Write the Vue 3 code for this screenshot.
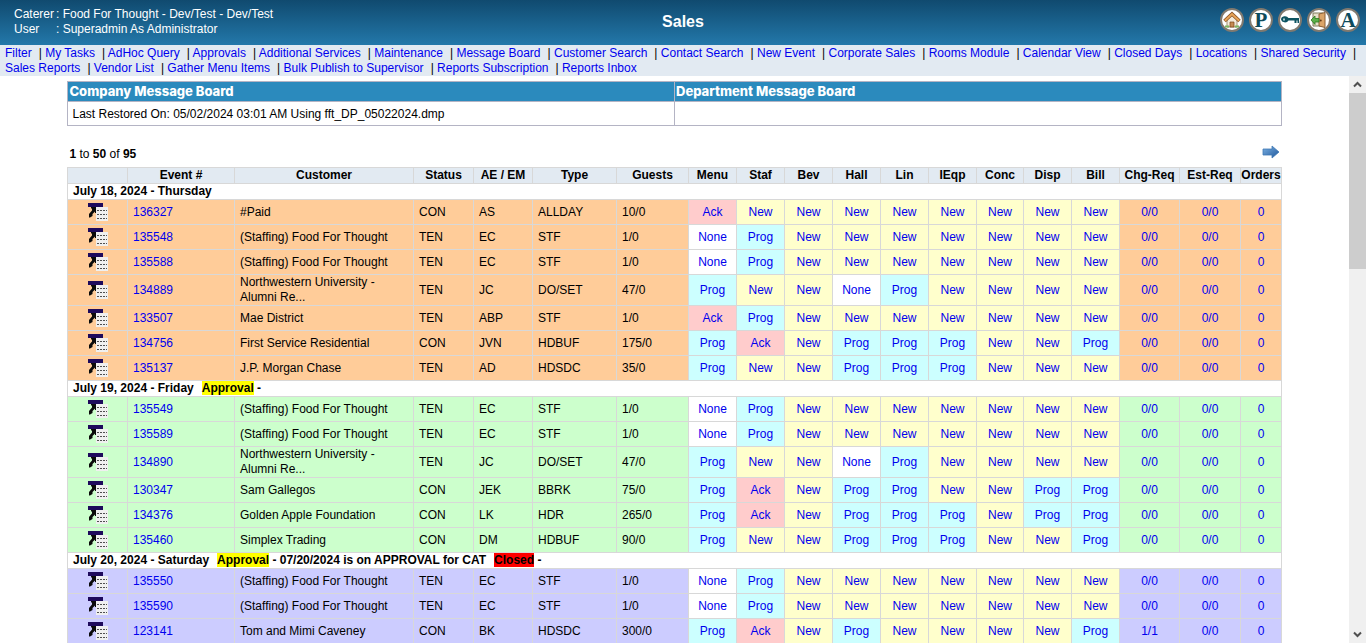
<script setup>
const nav = [
  'Filter', 'My Tasks', 'AdHoc Query', 'Approvals', 'Additional Services', 'Maintenance',
  'Message Board', 'Customer Search', 'Contact Search', 'New Event', 'Corporate Sales',
  'Rooms Module', 'Calendar View', 'Closed Days', 'Locations', 'Shared Security',
  'Sales Reports', 'Vendor List', 'Gather Menu Items', 'Bulk Publish to Supervisor',
  'Reports Subscription', 'Reports Inbox'
]

const columns = [
  ['', 'c60'], ['Event #', 'c107'], ['Customer', 'c179'], ['Status', 'c60'], ['AE / EM', 'c59'],
  ['Type', 'c84'], ['Guests', 'c72'], ['Menu', 'c48'], ['Staf', 'c48'], ['Bev', 'c48'],
  ['Hall', 'c48'], ['Lin', 'c48'], ['IEqp', 'c48'], ['Conc', 'c47'], ['Disp', 'c48'],
  ['Bill', 'c48'], ['Chg-Req', 'c60'], ['Est-Req', 'c61'], ['Orders', 'c41']
]

const labels = { A: 'Ack', N: 'New', P: 'Prog', O: 'None' }

// Department states are one letter each, in column order from Menu to Bill.
const ev = (id, customer, status, ae, type, guests, states, chg = '0/0') => ({
  id, customer, status, ae, type, guests, states: states.split(''), chg
})

const groups = [
  {
    date: 'July 18, 2024 - Thursday', tone: 'orange', notes: [],
    events: [
      ev(136327, '#Paid', 'CON', 'AS', 'ALLDAY', '10/0', 'ANNNNNNNN'),
      ev(135548, '(Staffing) Food For Thought', 'TEN', 'EC', 'STF', '1/0', 'OPNNNNNNN'),
      ev(135588, '(Staffing) Food For Thought', 'TEN', 'EC', 'STF', '1/0', 'OPNNNNNNN'),
      ev(134889, 'Northwestern University - Alumni Re...', 'TEN', 'JC', 'DO/SET', '47/0', 'PNNOPNNNN'),
      ev(133507, 'Mae District', 'TEN', 'ABP', 'STF', '1/0', 'APNNNNNNN'),
      ev(134756, 'First Service Residential', 'CON', 'JVN', 'HDBUF', '175/0', 'PANPPPNNP'),
      ev(135137, 'J.P. Morgan Chase', 'TEN', 'AD', 'HDSDC', '35/0', 'PNNPPPNNN')
    ]
  },
  {
    date: 'July 19, 2024 - Friday', tone: 'green', notes: [['Approval', 'yellow', '-']],
    events: [
      ev(135549, '(Staffing) Food For Thought', 'TEN', 'EC', 'STF', '1/0', 'OPNNNNNNN'),
      ev(135589, '(Staffing) Food For Thought', 'TEN', 'EC', 'STF', '1/0', 'OPNNNNNNN'),
      ev(134890, 'Northwestern University - Alumni Re...', 'TEN', 'JC', 'DO/SET', '47/0', 'PNNOPNNNN'),
      ev(130347, 'Sam Gallegos', 'CON', 'JEK', 'BBRK', '75/0', 'PANPPNNPP'),
      ev(134376, 'Golden Apple Foundation', 'CON', 'LK', 'HDR', '265/0', 'PANPPPNPP'),
      ev(135460, 'Simplex Trading', 'CON', 'DM', 'HDBUF', '90/0', 'PNNPPPNNP')
    ]
  },
  {
    date: 'July 20, 2024 - Saturday', tone: 'violet',
    notes: [['Approval', 'yellow', '- 07/20/2024 is on APPROVAL for CAT'], ['Closed', 'red', '-']],
    events: [
      ev(135550, '(Staffing) Food For Thought', 'TEN', 'EC', 'STF', '1/0', 'OPNNNNNNN'),
      ev(135590, '(Staffing) Food For Thought', 'TEN', 'EC', 'STF', '1/0', 'OPNNNNNNN'),
      ev(123141, 'Tom and Mimi Caveney', 'CON', 'BK', 'HDSDC', '300/0', 'PANPNNNNP', '1/1')
    ]
  }
]
</script>

<template>
  <div class="page">
    <header class="banner">
      <dl class="who">
        <dt>Caterer</dt><dd>: Food For Thought - Dev/Test - Dev/Test</dd>
        <dt>User</dt><dd>: Superadmin As Administrator</dd>
      </dl>
      <h1>Sales</h1>
      <div class="tools">
        <a href="#" aria-label="Home">
          <svg viewBox="0 0 20 20">
            <path d="M5 10v7h10v-7l-5-5z" fill="#f3ead9" stroke="#a49074" />
            <path d="M2.500 11 10 4l7.500 7" fill="none" stroke="#8a5426" stroke-width="3.600" />
            <path d="M2.800 10.700 10 4l7.200 6.700" fill="none" stroke="#e8a458" stroke-width="2" />
            <path d="M8 17v-5h4v5z" fill="#c58a52" stroke="#7a4518" stroke-width=".7" />
            <path d="M3 15.500h4v2H3zM13 15.500h4v2h-4z" fill="#7cb860" />
          </svg>
        </a>
        <a href="#" aria-label="P" class="letter">P</a>
        <a href="#" aria-label="Key">
          <svg viewBox="0 0 20 20">
            <path d="M1 9.500a4 3.500 0 0 1 7.500-1.500H19v5h-1.500v-2.500h-1V13h-2v-2.500h-6A4 3.500 0 0 1 1 9.500z" fill="#0d5361" />
            <path d="M3 8.500h2v2H3z" fill="#a8ccd0" />
          </svg>
        </a>
        <a href="#" aria-label="Exit">
          <svg viewBox="0 0 20 20">
            <path d="M4 3h10v13H4z" fill="#e6dfc9" stroke="#7d7a5c" />
            <path d="M10 4l6-1.500v15L10 16z" fill="#dba468" stroke="#8b5f36" />
            <circle cx="11.800" cy="10.500" r=".9" fill="#5b3512" />
            <path d="M2 10l4-4v2.500h4v3.500H6v2.500z" fill="#5bb04a" stroke="#2c7a20" stroke-width=".8" />
          </svg>
        </a>
        <a href="#" aria-label="A" class="letter">A</a>
      </div>
    </header>

    <nav class="menu">
      <template v-for="(item, i) in nav" :key="item">
        <span class="item"><a href="#">{{ item }}</a><span v-if="i < nav.length - 1" class="bar">|</span></span>{{ ' ' }}
      </template>
    </nav>

    <div class="body">
      <main class="content">
        <table class="board">
          <thead>
            <tr><th>Company Message Board</th><th>Department Message Board</th></tr>
          </thead>
          <tbody>
            <tr><td>Last Restored On: 05/02/2024 03:01 AM Using fft_DP_05022024.dmp</td><td></td></tr>
          </tbody>
        </table>

        <div class="pager">
          <span><b>1</b> to <b>50</b> of <b>95</b></span>
          <a href="#" aria-label="Next page">
            <svg viewBox="0 0 18 14">
              <defs>
                <linearGradient id="arrow" x1="0" y1="0" x2="1" y2="1">
                  <stop offset="0" stop-color="#7db2e4" />
                  <stop offset="1" stop-color="#1d5599" />
                </linearGradient>
              </defs>
              <path d="M1 4h9V1l7 6-7 6v-3H1z" fill="url(#arrow)" stroke="#3f78b5" stroke-width=".8" />
            </svg>
          </a>
        </div>

        <table class="events">
          <colgroup>
            <col v-for="(c, i) in columns" :key="i" :class="c[1]">
          </colgroup>
          <thead>
            <tr><th v-for="(c, i) in columns" :key="i">{{ c[0] }}</th></tr>
          </thead>
          <tbody v-for="g in groups" :key="g.date" :class="g.tone">
            <tr class="day">
              <th colspan="19" scope="rowgroup">{{ g.date }}<template v-for="n in g.notes" :key="n[0]"><mark :class="n[1]">{{ n[0] }}</mark> {{ n[2] }}</template></th>
            </tr>
            <tr v-for="e in g.events" :key="e.id">
              <td class="mid">
                <a href="#" class="pick" :aria-label="'Actions for ' + e.id">
                  <svg viewBox="0 0 20 18">
                    <path d="M8 4h12v14H8z" fill="#f0f0f0" />
                    <path d="M0 0h15v4H0z" fill="#1e0a5c" />
                    <path d="M9 7.500h10M9 11.500h10M9 15.500h10" stroke="#505050" stroke-dasharray="2 1" />
                    <path d="M3 4h5v6H7V8.500L4.500 11v2L2 14.500H1V11l3-3.500V5.500H3z" fill="#0a0a0a" />
                  </svg>
                </a>
              </td>
              <td><a href="#">{{ e.id }}</a></td>
              <td>{{ e.customer }}</td>
              <td>{{ e.status }}</td>
              <td>{{ e.ae }}</td>
              <td>{{ e.type }}</td>
              <td>{{ e.guests }}</td>
              <td v-for="(s, i) in e.states" :key="i" class="mid" :class="labels[s].toLowerCase()">
                <a href="#">{{ labels[s] }}</a>
              </td>
              <td class="mid"><a href="#">{{ e.chg }}</a></td>
              <td class="mid"><a href="#">0/0</a></td>
              <td class="mid"><a href="#">0</a></td>
            </tr>
          </tbody>
        </table>
      </main>

      <div class="scroll" aria-hidden="true">
        <svg viewBox="0 0 17 17"><path d="M5 10.500 8.500 7l3.500 3.500" /></svg>
        <div class="track"><div class="thumb"></div></div>
        <svg viewBox="0 0 17 17"><path d="M5 6.500 8.500 10 12 6.500" /></svg>
      </div>
    </div>
  </div>
</template>

<style>
body {
  margin: 0;
  overflow: hidden;
}
</style>

<style scoped>
.page {
  display: flex;
  flex-direction: column;
  height: 100vh;
  background: #fff;
  color: #000;
  font: 12px/15px "Liberation Sans", Arial, sans-serif;
}
a {
  color: #00e;
  text-decoration: none;
}
.banner {
  display: grid;
  grid-template-columns: 1fr auto 1fr;
  align-items: center;
  height: 45px;
  flex: none;
  padding: 0 6px 2px;
  box-sizing: border-box;
  background: linear-gradient(#104a6f, #2378aa);
  color: #fff;
}
.who {
  display: grid;
  grid-template-columns: 42px 1fr;
  margin: 0 0 0 8px;
}
.who dd {
  margin: 0;
}
.banner h1 {
  margin: 0;
  font-size: 16px;
  line-height: 20px;
}
.tools {
  display: flex;
  justify-content: flex-end;
  gap: 5px;
  padding-bottom: 4px;
}
.tools a {
  width: 20px;
  height: 20px;
  border: 2px solid #80796f;
  border-radius: 50%;
  background: #fff;
}
.tools svg {
  display: block;
}
.tools .letter {
  color: #0d4a5c;
  font: bold 21px/20px "Liberation Serif", serif;
  text-align: center;
}
.menu {
  flex: none;
  padding: 1px 0 0 5px;
  background: #e2eaf2;
}
.item {
  white-space: nowrap;
}
.bar {
  margin-left: 7px;
}
.body {
  display: flex;
  flex: 1;
  min-height: 0;
}
.content {
  flex: 1;
  overflow: hidden;
  padding-top: 5px;
}
.board {
  width: 90%;
  margin: 0 auto;
  table-layout: fixed;
  border-collapse: collapse;
}
.board th,
.board td {
  border: 1px solid #b4b4c4;
  text-align: left;
}
.board th {
  padding: 2px 1px;
  background: #2b8abd;
  color: #fff;
  font: 800 13px/15px Inter, "Liberation Sans", sans-serif;
}
.board td {
  height: 15px;
  padding: 5px 4px 3px;
}
.pager {
  display: flex;
  justify-content: space-between;
  width: 90%;
  margin: 18px auto 3px;
  padding: 0 2px;
  box-sizing: border-box;
  line-height: 20px;
}
.pager svg {
  display: block;
  width: 18px;
  height: 14px;
  margin-top: 1px;
}
.events {
  width: 90%;
  margin: 0 auto;
  table-layout: fixed;
  border-collapse: collapse;
}
.c41 { width: 41px; }
.c47 { width: 47px; }
.c48 { width: 48px; }
.c59 { width: 59px; }
.c60 { width: 60px; }
.c61 { width: 61px; }
.c72 { width: 72px; }
.c84 { width: 84px; }
.c107 { width: 107px; }
.c179 { width: 179px; }
.events th,
.events td {
  border: 1px solid #d8d8d8;
}
.events th {
  padding: 0;
  background: #e2eaf2;
  white-space: nowrap;
}
.events td {
  height: 25px;
  padding: 0 5px;
  box-sizing: border-box;
}
.events .day th {
  padding-left: 5px;
  background: #fff;
  text-align: left;
}
.events .mid {
  padding: 0;
  text-align: center;
}
mark {
  margin-left: 8px;
  color: #000;
}
.yellow { background: #ff0; }
.red { background: #f00; }
.orange td { background: #fc9; }
.green td { background: #cfc; }
.violet td { background: #ccf; }
.events .ack { background: #fcc; }
.events .new { background: #ffc; }
.events .prog { background: #cff; }
.events .none { background: #fff; }
.pick svg {
  display: block;
  width: 20px;
  height: 18px;
  margin: 0 auto;
}
.scroll {
  display: flex;
  flex-direction: column;
  width: 17px;
  background: #f0f0f0;
}
.scroll svg {
  width: 17px;
  height: 17px;
  flex: none;
  fill: none;
  stroke: #505050;
  stroke-width: 2;
}
.track {
  flex: 1;
}
.thumb {
  height: 33%;
  background: #cdcdcd;
}
</style>
